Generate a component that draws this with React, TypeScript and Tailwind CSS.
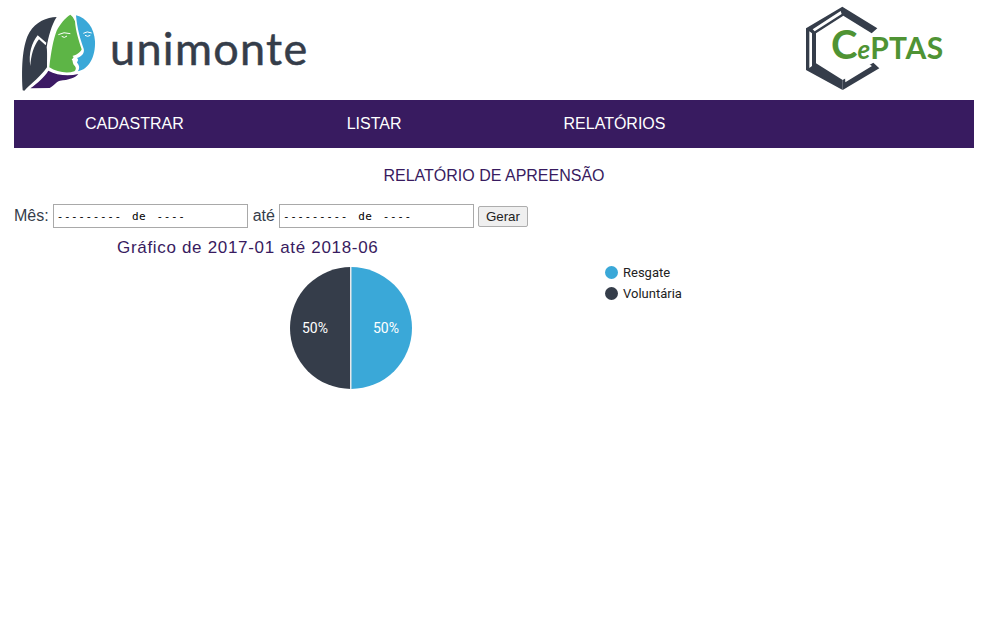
import React from "react";

function UniLogo() {
  return (
    <svg width="90" height="86" viewBox="0 0 270 258" className="shrink-0">
      <path fill="#353d4a" d="M125 27 C95 28 62 42 44 72 C24 105 18 170 23 247 L28 248 C50 225 78 205 96 178 C96 150 97 132 95 118 C100 85 110 50 125 27 Z" />
      <path fill="#fff" d="M68 82 C50 104 40 138 46 174 C48 142 56 114 72 94 L92 112 L94 104 Z" />
      <path fill="#5db546" d="M166 20 C150 30 135 48 125 68 C115 95 108 130 103 178 C125 192 155 198 178 190 C186 182 182 176 176 170 C172 163 174 157 170 154 C178 150 176 146 172 144 C184 142 198 132 200 124 C192 100 182 70 180 40 C176 30 172 24 166 20 Z" />
      <path fill="#3aa8d8" d="M183 22 C215 30 238 60 240 100 C242 145 222 185 188 190 C196 180 192 170 186 164 C188 158 192 156 186 150 C198 146 210 136 206 122 C196 95 186 60 183 22 Z" />
      <path fill="#3c1a64" d="M100 188 C125 202 160 205 190 198 C180 210 160 216 135 218 C122 222 118 232 104 240 L46 241 C68 225 88 208 100 188 Z" />
      <path fill="none" stroke="#fff" strokeWidth="3" d="M130 80 Q146 70 166 77 M140 85 Q148 92 156 84 M205 76 Q216 68 230 75 M210 82 Q218 88 226 82" />
    </svg>
  );
}

function CeptasLogo() {
  return (
    <svg width="170" height="100" viewBox="0 0 510 300" className="absolute left-0 top-0">
      <path fill="#353d4a" d="M157 20 L262 85 L245 100 L160 47 L78 100 L78 190 L158 240 L158 270 L48 210 L48 85 Z" />
      <path fill="#353d4a" d="M158 270 L268 205 L250 188 L158 240 Z" />
      <path fill="#fff" d="M68 88 L152 33 L155 42 L74 94 Z M58 94 L66 100 L66 198 L58 204 Z M165 232 L235 191 L246 198 L166 247 Z" />
    </svg>
  );
}

function Pie() {
  return (
    <svg width="124" height="124" viewBox="0 0 124 124" className="block">
      <path d="M62 1 A61 61 0 0 1 62 123 Z" fill="#3aa8d8" />
      <path d="M62 1 A61 61 0 0 0 62 123 Z" fill="#353d4a" />
      <rect x="61" y="1" width="1.5" height="122" fill="#e6e8ea" />
      <text x="97" y="67" textAnchor="middle" fill="#fff" fontSize="14" fontFamily="Roboto, sans-serif">50%</text>
      <text x="26" y="67" textAnchor="middle" fill="#fff" fontSize="14" fontFamily="Roboto, sans-serif">50%</text>
    </svg>
  );
}

function MonthField() {
  return (
    <input
      readOnly
      value="--------- de ----"
      className="h-6 w-[195px] border border-[#a9a9a9] bg-white px-[3px] font-['DejaVu_Sans_Mono',monospace] text-[11px] tracking-[0.6px] [word-spacing:3px] text-black outline-none"
    />
  );
}

export default function App() {
  return (
    <div className="min-h-[624px] bg-white pl-[14px] pr-[24px] font-['Liberation_Sans',Arial,sans-serif] text-[#381b60]">
      <header className="flex h-[100px] items-start justify-between">
        <div className="flex items-center pt-[8px]">
          <div className="ml-[1px]">
            <UniLogo />
          </div>
          <span className="mb-[6px] ml-[5px] font-['Lato',sans-serif] text-[45px] leading-none tracking-[1.3px] [-webkit-text-stroke:0.5px_#353d4a] text-[#353d4a]">unimonte</span>
        </div>
        <div className="relative mr-[14px] h-[100px] w-[170px]">
          <CeptasLogo />
          <div className="absolute left-[41px] top-[24px] flex items-baseline font-['Lato',sans-serif] font-bold leading-[40px] text-[#4f9334]">
            <span className="text-[40px]">C</span>
            <span className="text-[26px] italic">e</span>
            <span className="text-[30px] tracking-[0.4px]">PTAS</span>
          </div>
        </div>
      </header>
      <nav className="flex h-12 items-center bg-[#381b60] text-[16px] text-white">
        <a className="ml-[71px]">CADASTRAR</a>
        <a className="ml-[163px]">LISTAR</a>
        <a className="ml-[162px]">RELATÓRIOS</a>
      </nav>
      <h1 className="mt-[18px] text-center text-[16px] font-normal leading-[20px]">RELATÓRIO DE APREENSÃO</h1>
      <div className="mt-[18px] flex h-6 items-center text-[16px] text-[#353d4a]">
        <span className="mr-[4px]">Mês:</span>
        <MonthField />
        <span className="ml-[5px] mr-[4px]">até</span>
        <MonthField />
        <button className="ml-[4px] h-[21px] w-[50px] rounded-[2px] border border-[#adadad] bg-[#efefef] text-[13.33px] text-[#222]">Gerar</button>
      </div>
      <div className="mt-[10px] pl-[103px] text-[17px] leading-5 tracking-[0.68px]">Gráfico de 2017-01 até 2018-06</div>
      <div className="mt-[8px] flex items-start">
        <div className="ml-[275px]">
          <Pie />
        </div>
        <ul className="ml-[192px] mt-[-4px] flex flex-col font-['Roboto',sans-serif] text-[13px] text-[#222]">
          <li className="flex h-[21px] items-center gap-[5px]">
            <span className="size-[13px] rounded-full bg-[#3aa8d8]" />
            Resgate
          </li>
          <li className="flex h-[21px] items-center gap-[5px]">
            <span className="size-[13px] rounded-full bg-[#353d4a]" />
            Voluntária
          </li>
        </ul>
      </div>
    </div>
  );
}
